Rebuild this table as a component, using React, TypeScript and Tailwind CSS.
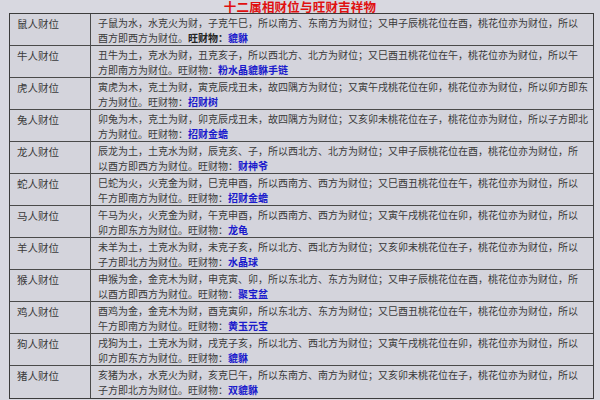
const rows: { name: string; l1: string; l2: string; item: string; boldLabel?: boolean }[] = [
  { name: '鼠人财位', l1: '子鼠为水，水克火为财，子克午巳，所以南方、东南方为财位；又申子辰桃花位在酉，桃花位亦为财位，所以', l2: '酉方即西方为财位。', item: '貔貅', boldLabel: true },
  { name: '牛人财位', l1: '丑牛为土，克水为财，丑克亥子，所以西北方、北方为财位；又巳酉丑桃花位在午，桃花位亦为财位，所以午', l2: '方即南方为财位。', item: '粉水晶貔貅手链' },
  { name: '虎人财位', l1: '寅虎为木，克土为财，寅克辰戌丑未，故四隅方为财位；又寅午戌桃花位在卯，桃花位亦为财位，所以卯方即东', l2: '方为财位。', item: '招财树' },
  { name: '兔人财位', l1: '卯兔为木，克土为财，卯克辰戌丑未，故四隅方为财位；又亥卯未桃花位在子，桃花位亦为财位，所以子方即北', l2: '方为财位。', item: '招财金蟾' },
  { name: '龙人财位', l1: '辰龙为土，土克水为财，辰克亥、子，所以西北方、北方为财位；又申子辰桃花位在酉，桃花位亦为财位，所', l2: '以酉方即西方为财位。', item: '财神爷' },
  { name: '蛇人财位', l1: '巳蛇为火，火克金为财，巳克申酉，所以西南方、西方为财位；又巳酉丑桃花位在午，桃花位亦为财位，所以', l2: '午方即南方为财位。', item: '招财金蟾' },
  { name: '马人财位', l1: '午马为火，火克金为财，午克申酉，所以西南方、西方为财位；又寅午戌桃花位在卯，桃花位亦为财位，所以', l2: '卯方即东方为财位。', item: '龙龟' },
  { name: '羊人财位', l1: '未羊为土，土克水为财，未克子亥，所以北方、西北方为财位；又亥卯未桃花位在子，桃花位亦为财位，所以', l2: '子方即北方为财位。', item: '水晶球' },
  { name: '猴人财位', l1: '申猴为金，金克木为财，申克寅、卯，所以东北方、东方为财位；又申子辰桃花位在酉，桃花位亦为财位，所', l2: '以酉方即西方为财位。', item: '聚宝盆' },
  { name: '鸡人财位', l1: '酉鸡为金，金克木为财，酉克寅卯，所以东北方、东方为财位；又巳酉丑桃花位在午，桃花位亦为财位，所以', l2: '午方即南方为财位。', item: '黄玉元宝' },
  { name: '狗人财位', l1: '戌狗为土，土克水为财，戌克子亥，所以北方、西北方为财位；又寅午戌桃花位在卯，桃花位亦为财位，所以', l2: '卯方即东方为财位。', item: '貔貅' },
  { name: '猪人财位', l1: '亥猪为水，水克火为财，亥克巳午，所以东南方、南方为财位；又亥卯未桃花位在子，桃花位亦为财位，所以', l2: '子方即北方为财位。', item: '双貔貅' },
];

export default function App() {
  return (
    <div
      className="w-[600px] h-[400px] overflow-hidden bg-[#d8d8e0] text-[#3a3a3a]"
      style={{ fontFamily: '"Noto Sans CJK SC", "Noto Sans", sans-serif' }}
    >
      {/* Title */}
      <div className="h-[13px] flex justify-center items-end">
        <span className="text-[12.5px] leading-[13px] font-bold text-[#e01010] tracking-[0.2px]">
          十二属相财位与旺财吉祥物
        </span>
      </div>

      {/* Table */}
      <div className="ml-[9px] w-[585px] border border-[#3c3c3c] bg-[#d4d4dc]">
        {rows.map((r, i) => (
          <div
            key={r.name}
            className={`flex h-[32px] ${i < rows.length - 1 ? 'border-b border-[#4a4a4a]' : ''}`}
          >
            <div className="w-[81px] shrink-0 border-r border-[#4a4a4a] pl-[7px] pt-[2px] text-[10.5px] leading-[15px]">
              {r.name}
            </div>
            <div className="flex-1 pl-[7px] pt-[2px] text-[10px] leading-[14.5px] whitespace-nowrap">
              <div>{r.l1}</div>
              <div>
                {r.l2}
                <span className={r.boldLabel ? 'font-bold text-[#222]' : ''}>旺财物：</span>
                <span className="font-bold text-[#1a1acc]">{r.item}</span>
              </div>
            </div>
          </div>
        ))}
      </div>
    </div>
  );
}
